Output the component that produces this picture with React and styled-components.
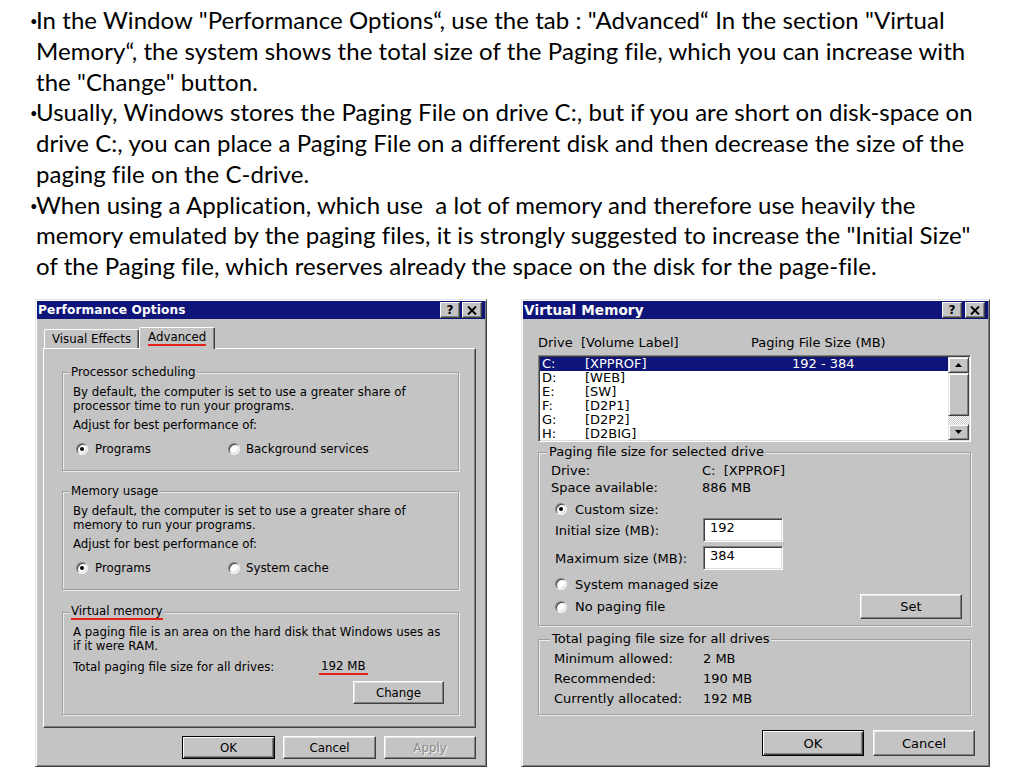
import React from 'react';
import styled, { createGlobalStyle, css } from 'styled-components';

const dlgFont = `"DejaVu Sans", Tahoma, Verdana, sans-serif`;
const GREY = '#c4c4c4';
const NAVY = '#0e1478';
const RED = '#e42018';

const Global = createGlobalStyle`
  html, body { margin: 0; padding: 0; background: #fff; }
  body { width: 1024px; height: 768px; overflow: hidden; }
`;

const Page = styled.div`
  width: 1024px;
  height: 768px;
  overflow: hidden;
  display: flex;
  flex-direction: column;
`;

const Intro = styled.div`
  box-sizing: border-box;
  height: 299px;
  padding: 5px 0 0 30px;
  font-family: Lato, "Liberation Sans", sans-serif;
  font-size: 24px;
  letter-spacing: 0.06px;
  line-height: 30.75px;
  color: #000;
`;

const Para = styled.p`
  margin: 0;
  padding-left: 6px;
  white-space: nowrap;
`;

const Dot = styled.span`
  display: inline-block;
  width: 6px;
  margin-left: -6px;
  font-size: 13px;
  line-height: 10px;
  vertical-align: 3px;
`;

const DialogRow = styled.div`
  display: flex;
  gap: 34px;
  padding-left: 35px;
`;

const Window = styled.div`
  box-sizing: border-box;
  width: ${p => p.$w}px;
  height: 468px;
  background: ${GREY};
  border: 1px solid;
  border-color: #e4e4e4 #404040 #404040 #e4e4e4;
  box-shadow: inset 1px 1px 0 #fff, inset -1px -1px 0 #808080;
  padding: 1px 1px 0;
  display: flex;
  flex-direction: column;
  font-family: ${dlgFont};
  font-size: ${p => p.$fs}px;
  color: #000;
`;

const TitleBar = styled.div`
  height: 18px;
  flex: none;
  background: ${NAVY};
  display: flex;
  align-items: center;
  justify-content: space-between;
  padding: 0 3px 0 1px;
`;

const TitleText = styled.span`
  color: #fff;
  font-weight: bold;
  font-size: ${p => p.$fs}px;
  letter-spacing: 0.1px;
`;

const CapButtons = styled.div`
  display: flex;
  gap: ${p => p.$gap}px;
`;

const CapButton = styled.div`
  box-sizing: border-box;
  width: ${p => p.$w}px;
  height: 16px;
  background: ${GREY};
  border: 1px solid;
  border-color: #fff #404040 #404040 #fff;
  box-shadow: inset -1px -1px 0 #808080;
  display: flex;
  align-items: center;
  justify-content: center;
  font-weight: bold;
  font-size: 12px;
  line-height: 1;
  color: #000;
`;

const Body = styled.div`
  display: flex;
  flex-direction: column;
  padding: ${p => p.$pad};
`;

const TabStrip = styled.div`
  display: flex;
  align-items: flex-end;
  height: 21px;
  padding-left: 1px;
`;

const Tab = styled.div`
  box-sizing: border-box;
  height: ${p => (p.$active ? 22 : 19)}px;
  padding: 0 ${p => (p.$active ? 8 : 7)}px;
  background: ${GREY};
  border: 1px solid;
  border-bottom: none;
  border-color: #fff #404040 transparent #fff;
  box-shadow: inset -1px 0 0 #808080;
  border-radius: 2px 2px 0 0;
  display: flex;
  align-items: center;
  position: relative;
  z-index: ${p => (p.$active ? 2 : 1)};
  margin-bottom: ${p => (p.$active ? -1 : 0)}px;
`;

const TabPanel = styled.div`
  box-sizing: border-box;
  height: 380px;
  border: 1px solid;
  border-color: #fff #404040 #404040 #fff;
  box-shadow: inset -1px -1px 0 #808080;
  padding: 16px 16px 0 18px;
  display: flex;
  flex-direction: column;
`;

const Group = styled.fieldset`
  margin: ${p => p.$mt || 0}px 0 0;
  padding: 0 ${p => p.$pr}px ${p => p.$pb}px ${p => p.$pl}px;
  border: 1px solid #9e9e9e;
  box-shadow: inset 1px 1px 0 #ececec, 1px 1px 0 #ececec;
  min-width: 0;
  display: flex;
  flex-direction: column;
`;

const Legend = styled.legend`
  padding: 0 2px;
  margin-left: -4px;
  line-height: 14px;
  background: ${GREY};
`;

const Text = styled.div`
  line-height: 14px;
  margin-top: ${p => p.$mt || 0}px;
`;

const RadioRow = styled.div`
  display: flex;
  align-items: center;
  height: 16px;
  margin-top: ${p => p.$mt || 0}px;
  padding-left: ${p => p.$pl || 0}px;
`;

const RadioCell = styled.div`
  display: flex;
  align-items: center;
  width: ${p => (p.$w ? `${p.$w}px` : 'auto')};
`;

const Radio = styled.span`
  box-sizing: border-box;
  width: 12px;
  height: 12px;
  flex: none;
  border-radius: 50%;
  background: #fff;
  border: 1px solid;
  border-color: #808080 #f4f4f4 #f4f4f4 #808080;
  box-shadow: inset 1px 1px 0 #404040, inset -1px -1px 0 #dcdcdc;
  margin-right: ${p => p.$gap || 7}px;
  display: flex;
  align-items: center;
  justify-content: center;
  &::after {
    content: '';
    width: 4px;
    height: 4px;
    border-radius: 50%;
    background: ${p => (p.$checked ? '#000' : 'transparent')};
  }
`;

const Btn = styled.button`
  box-sizing: border-box;
  width: ${p => p.$w}px;
  height: ${p => p.$h}px;
  padding: 0;
  margin: 0;
  font: inherit;
  background: ${GREY};
  border: 1px solid;
  border-color: #fff #404040 #404040 #fff;
  box-shadow: inset -1px -1px 0 #808080, inset 1px 1px 0 #e4e4e4;
  color: #000;
  ${p =>
    p.$default &&
    css`
      border-color: #000;
      box-shadow: inset 1px 1px 0 #fff, inset -1px -1px 0 #404040, inset -2px -2px 0 #808080;
    `}
  ${p =>
    p.$disabled &&
    css`
      color: #8a8a8a;
      text-shadow: 1px 1px 0 #f4f4f4;
    `}
`;

const ButtonRow = styled.div`
  display: flex;
  justify-content: ${p => p.$justify || 'flex-end'};
  align-items: center;
  gap: ${p => p.$gap || 8}px;
  margin-top: ${p => p.$mt || 0}px;
  margin-right: ${p => p.$mr || 0}px;
`;

const Mark = styled.span`
  display: inline-block;
  line-height: 13px;
  border-bottom: 2px solid ${RED};
  padding: 0 ${p => p.$px || 0}px;
  margin: 0 -${p => p.$px || 0}px;
`;

const InfoRow = styled.div`
  display: grid;
  grid-template-columns: ${p => p.$label}px auto;
  align-items: center;
  height: ${p => p.$h || 14}px;
  margin-top: ${p => p.$mt || 0}px;
  padding-left: ${p => p.$pl || 0}px;
  line-height: 14px;
`;

const ListHeader = styled.div`
  display: grid;
  grid-template-columns: 213px auto;
  line-height: 14px;
  margin-top: 17px;
`;

const ListBox = styled.div`
  box-sizing: border-box;
  height: 87px;
  margin-top: 5px;
  background: #fff;
  border: 1px solid;
  border-color: #808080 #fff #fff #808080;
  box-shadow: inset 1px 1px 0 #404040, inset -1px -1px 0 #dcdcdc;
  padding: 1px;
  display: flex;
`;

const Rows = styled.div`
  flex: 1;
  overflow: hidden;
`;

const Row = styled.div`
  display: grid;
  grid-template-columns: 43px 207px auto;
  height: 14px;
  line-height: 14px;
  padding-left: 2px;
  background: ${p => (p.$selected ? NAVY : 'transparent')};
  color: ${p => (p.$selected ? '#fff' : '#000')};
`;

const ScrollBar = styled.div`
  width: 21px;
  flex: none;
  display: flex;
  flex-direction: column;
  background: repeating-conic-gradient(#fff 0 25%, #c8c8c8 0 50%) 0 0 / 2px 2px;
`;

const ScrollPart = styled.div`
  box-sizing: border-box;
  height: ${p => p.$h}px;
  flex: none;
  background: ${GREY};
  border: 1px solid;
  border-color: #e4e4e4 #404040 #404040 #e4e4e4;
  box-shadow: inset 1px 1px 0 #fff, inset -1px -1px 0 #808080;
  display: flex;
  align-items: center;
  justify-content: center;
`;

const ScrollGap = styled.div`
  flex: 1;
`;

const FieldRow = styled.div`
  display: grid;
  grid-template-columns: 148px 80px;
  align-items: center;
  margin-top: ${p => p.$mt}px;
  padding-left: 4px;
`;

const Input = styled.div`
  box-sizing: border-box;
  height: 24px;
  background: #fff;
  border: 1px solid;
  border-color: #808080 #fff #fff #808080;
  box-shadow: inset 1px 1px 0 #404040, inset -1px -1px 0 #dcdcdc;
  padding: 2px 0 0 6px;
  line-height: 14px;
`;

const Arrow = ({ down }) => (
  <svg width="7" height="4" viewBox="0 0 7 4">
    <path d={down ? 'M0 0H7L3.5 4Z' : 'M0 4H7L3.5 0Z'} fill="#000" />
  </svg>
);

const CloseGlyph = () => (
  <svg width="10" height="9" viewBox="0 0 10 9">
    <path d="M1 0.5L9 8.5M9 0.5L1 8.5" stroke="#000" strokeWidth="1.9" />
  </svg>
);

const Caption = ({ title, w, gap, fs }) => (
  <TitleBar>
    <TitleText $fs={fs}>{title}</TitleText>
    <CapButtons $gap={gap}>
      <CapButton $w={w}>?</CapButton>
      <CapButton $w={w}>
        <CloseGlyph />
      </CapButton>
    </CapButtons>
  </TitleBar>
);

const RadioPair = ({ a, b }) => (
  <RadioRow $mt={9} $pl={3}>
    <RadioCell $w={152}>
      <Radio $checked />
      {a}
    </RadioCell>
    <RadioCell>
      <Radio $gap={6} />
      {b}
    </RadioCell>
  </RadioRow>
);

const PerformanceOptions = () => (
  <Window $w={452} $fs={11.8}>
    <Caption title="Performance Options" w={20} gap={2} fs={12.2} />
    <Body $pad="8px 9px 0 6px">
      <TabStrip>
        <Tab>Visual Effects</Tab>
        <Tab $active>
          <Mark>Advanced</Mark>
        </Tab>
      </TabStrip>
      <TabPanel>
        <Group $pl={10} $pr={14} $pb={13}>
          <Legend>Processor scheduling</Legend>
          <Text $mt={6}>
            By default, the computer is set to use a greater share of
            <br />
            processor time to run your programs.
          </Text>
          <Text $mt={5}>Adjust for best performance of:</Text>
          <RadioPair a="Programs" b="Background services" />
        </Group>
        <Group $mt={13} $pl={10} $pr={14} $pb={13}>
          <Legend>Memory usage</Legend>
          <Text $mt={6}>
            By default, the computer is set to use a greater share of
            <br />
            memory to run your programs.
          </Text>
          <Text $mt={5}>Adjust for best performance of:</Text>
          <RadioPair a="Programs" b="System cache" />
        </Group>
        <Group $mt={14} $pl={10} $pr={14} $pb={10}>
          <Legend>
            <Mark>Virtual memory</Mark>
          </Legend>
          <Text $mt={5}>
            A paging file is an area on the hard disk that Windows uses as
            <br />
            if it were RAM.
          </Text>
          <InfoRow $label={248} $mt={6}>
            <span>Total paging file size for all drives:</span>
            <span>
              <Mark $px={2}>192 MB</Mark>
            </span>
          </InfoRow>
          <ButtonRow $mt={8}>
            <Btn $w={91} $h={23}>Change</Btn>
          </ButtonRow>
        </Group>
      </TabPanel>
      <ButtonRow $mt={8} $gap={8}>
        <Btn $w={93} $h={23} $default>OK</Btn>
        <Btn $w={93} $h={23}>Cancel</Btn>
        <Btn $w={92} $h={23} $disabled>Apply</Btn>
      </ButtonRow>
    </Body>
  </Window>
);

const drives = [
  ['C:', '[XPPROF]', '192 - 384'],
  ['D:', '[WEB]', ''],
  ['E:', '[SW]', ''],
  ['F:', '[D2P1]', ''],
  ['G:', '[D2P2]', ''],
  ['H:', '[D2BIG]', ''],
];

const VirtualMemory = () => (
  <Window $w={469} $fs={13}>
    <Caption title="Virtual Memory" w={20} gap={3} fs={13.6} />
    <Body $pad="0 17px 0 15px">
      <ListHeader>
        <span>Drive&nbsp;&nbsp;[Volume Label]</span>
        <span>Paging File Size (MB)</span>
      </ListHeader>
      <ListBox>
        <Rows>
          {drives.map(([d, l, s], i) => (
            <Row key={d} $selected={i === 0}>
              <span>{d}</span>
              <span>{l}</span>
              <span>{s}</span>
            </Row>
          ))}
        </Rows>
        <ScrollBar>
          <ScrollPart $h={16}>
            <Arrow />
          </ScrollPart>
          <ScrollPart $h={43} />
          <ScrollGap />
          <ScrollPart $h={16}>
            <Arrow down />
          </ScrollPart>
        </ScrollBar>
      </ListBox>
      <Group $mt={3} $pl={12} $pr={8} $pb={6}>
        <Legend>Paging file size for selected drive</Legend>
        <InfoRow $label={151} $mt={5}>
          <span>Drive:</span>
          <span>C:&nbsp;&nbsp;[XPPROF]</span>
        </InfoRow>
        <InfoRow $label={151} $mt={3}>
          <span>Space available:</span>
          <span>886 MB</span>
        </InfoRow>
        <RadioRow $mt={6} $pl={4}>
          <Radio $checked $gap={8} />
          Custom size:
        </RadioRow>
        <FieldRow $mt={1}>
          <span>Initial size (MB):</span>
          <Input>192</Input>
        </FieldRow>
        <FieldRow $mt={4}>
          <span>Maximum size (MB):</span>
          <Input>384</Input>
        </FieldRow>
        <RadioRow $mt={6} $pl={4}>
          <Radio $gap={8} />
          System managed size
        </RadioRow>
        <ButtonRow $mt={2} $justify="space-between">
          <RadioRow $pl={4}>
            <Radio $gap={8} />
            No paging file
          </RadioRow>
          <Btn $w={102} $h={25}>Set</Btn>
        </ButtonRow>
      </Group>
      <Group $mt={6} $pl={15} $pr={8} $pb={7}>
        <Legend>Total paging file size for all drives</Legend>
        <InfoRow $label={149} $h={16} $mt={5}>
          <span>Minimum allowed:</span>
          <span>2 MB</span>
        </InfoRow>
        <InfoRow $label={149} $h={16} $mt={4}>
          <span>Recommended:</span>
          <span>190 MB</span>
        </InfoRow>
        <InfoRow $label={149} $h={16} $mt={4}>
          <span>Currently allocated:</span>
          <span>192 MB</span>
        </InfoRow>
      </Group>
      <ButtonRow $mt={15} $gap={9} $mr={-4}>
        <Btn $w={102} $h={26} $default>OK</Btn>
        <Btn $w={102} $h={26}>Cancel</Btn>
      </ButtonRow>
    </Body>
  </Window>
);

export default function App() {
  return (
    <Page>
      <Global />
      <Intro>
        <Para>
          <Dot>•</Dot>In the Window "Performance Options“, use the tab : "Advanced“ In the section "Virtual
          <br />
          Memory“, the system shows the total size of the Paging file, which you can increase with
          <br />
          the "Change" button.
        </Para>
        <Para>
          <Dot>•</Dot>Usually, Windows stores the Paging File on drive C:, but if you are short on disk-space on
          <br />
          drive C:, you can place a Paging File on a different disk and then decrease the size of the
          <br />
          paging file on the C-drive.
        </Para>
        <Para>
          <Dot>•</Dot>When using a Application, which use&nbsp; a lot of memory and therefore use heavily the
          <br />
          memory emulated by the paging files, it is strongly suggested to increase the "Initial Size"
          <br />
          of the Paging file, which reserves already the space on the disk for the page-file.
        </Para>
      </Intro>
      <DialogRow>
        <PerformanceOptions />
        <VirtualMemory />
      </DialogRow>
    </Page>
  );
}
